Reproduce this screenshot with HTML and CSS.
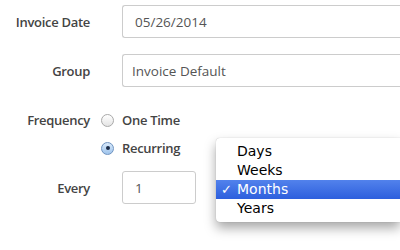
FILE: index.html
```html
<!DOCTYPE html>
<html lang="en">

<head>
    <meta charset="UTF-8">
    <meta name="viewport" content="width=device-width, initial-scale=1.0">
    <title>Invoice Settings</title>
    <link rel="stylesheet" href="styles.css">
</head>

<body>
    <div id="invoice-form">
        <div class="row row-date">
            <label class="label">Invoice Date</label>
            <input class="text-input date-input" type="text" value="05/26/2014">
        </div>

        <div class="row row-group">
            <label class="label">Group</label>
            <input class="text-input group-input" type="text" value="Invoice Default">
        </div>

        <div class="row row-frequency">
            <label class="label">Frequency</label>
            <span class="radio"></span>
            <span class="radio-text">One Time</span>
        </div>

        <div class="row row-recurring">
            <span class="label"></span>
            <span class="radio checked"></span>
            <span class="radio-text">Recurring</span>
        </div>

        <div class="row row-every">
            <label class="label">Every</label>
            <input class="text-input every-input" type="text" value="1">
        </div>

        <ul id="unit-menu">
            <li>Days</li>
            <li>Weeks</li>
            <li class="selected"><span class="check">✓</span>Months</li>
            <li>Years</li>
        </ul>
    </div>
</body>

</html>
```

FILE: styles.css
```css
body {
    margin: 0;
    padding: 0;
    background-color: #ffffff;
    font-family: 'Open Sans', sans-serif;
    overflow: hidden;
}

#invoice-form {
    position: relative;
    padding-top: 5px;
    height: 245px;
}

.row {
    display: flex;
    align-items: center;
}

.label {
    width: 90px;
    margin-right: 11px;
    text-align: right;
    font-size: 13px;
    font-weight: 600;
    letter-spacing: -0.3px;
    color: #444444;
    flex-shrink: 0;
}

.text-input {
    box-sizing: border-box;
    height: 33px;
    margin-left: 21px;
    border: 1px solid #cccccc;
    border-radius: 3px;
    background-color: #ffffff;
    font-family: 'Open Sans', sans-serif;
    font-size: 13.5px;
    color: #555555;
    outline: none;
}

/* these two run off the right side of the window */
.date-input,
.group-input {
    flex: 1;
    min-width: 0;
    border-right: none;
    border-radius: 3px 0 0 3px;
}

.date-input {
    padding: 0 12px;
}

.group-input {
    padding: 0 9px;
}

.every-input {
    width: 74px;
    padding: 0 12px;
}

.row-group {
    margin-top: 16px;
}

.row-frequency {
    margin-top: 23px;
    height: 20px;
}

.row-recurring {
    margin-top: 8px;
    height: 20px;
}

.row-every {
    margin-top: 13px;
}

.radio {
    box-sizing: border-box;
    width: 13px;
    height: 13px;
    border-radius: 50%;
    border: 1px solid #a9a9a9;
    background: linear-gradient(#ffffff, #e4e4e4);
    display: flex;
    align-items: center;
    justify-content: center;
    flex-shrink: 0;
}

.radio.checked {
    border-color: #6f93c0;
    background: linear-gradient(#d9e9fa, #9fc4ec);
}

.radio.checked::after {
    content: '';
    width: 4px;
    height: 4px;
    border-radius: 50%;
    background-color: #1b2b47;
}

.radio-text {
    margin-left: 8px;
    font-size: 13px;
    font-weight: 600;
    letter-spacing: -0.3px;
    color: #444444;
}

#unit-menu {
    position: absolute;
    left: 216px;
    right: 0;
    top: 138px;
    margin: 0;
    padding: 4px 0;
    list-style-type: none;
    background-color: #ffffff;
    border-radius: 4px 0 0 4px;
    box-shadow: 0px 6px 12px rgba(0, 0, 0, 0.35), 0px 0px 1px rgba(0, 0, 0, 0.3);
    font-family: 'DejaVu Sans', sans-serif;
    font-size: 14px;
    color: #000000;
}

#unit-menu li {
    position: relative;
    height: 19px;
    line-height: 19px;
    padding-left: 21px;
}

#unit-menu li.selected {
    background: linear-gradient(#5282ec, #2d5fdd);
    color: #ffffff;
}

.check {
    position: absolute;
    left: 5px;
    font-size: 13px;
}
```
